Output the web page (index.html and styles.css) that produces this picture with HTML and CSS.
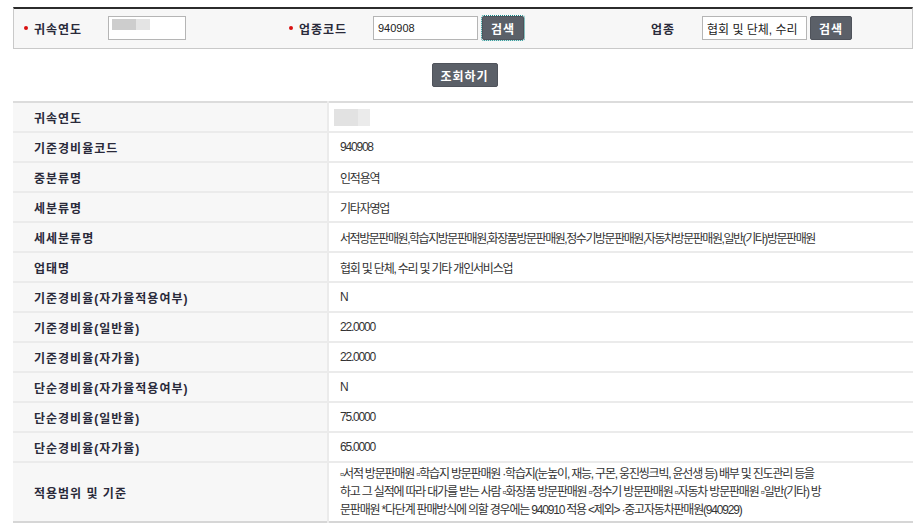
FILE: index.html
```html
<!DOCTYPE html>
<html lang="ko">
<head>
  <meta charset="UTF-8" />
  <title>기준경비율 조회</title>
  <link rel="stylesheet" href="styles.css">
</head>
<body>
  <div class="wrap">
    <div class="search-box">
      <div class="field">
        <label class="req">귀속연도</label>
        <div class="input year"><span class="blur dark"></span><span class="blur light"></span></div>
      </div>
      <div class="field">
        <label class="req">업종코드</label>
        <div class="input code">940908</div>
        <button class="btn focused">검색</button>
      </div>
      <div class="field">
        <label class="plain">업종</label>
        <div class="input name">협회 및 단체, 수리</div>
        <button class="btn">검색</button>
      </div>
    </div>

    <div class="actions">
      <button class="btn big">조회하기</button>
    </div>

    <table class="result">
      <tbody>
        <tr><th>귀속연도</th><td><span class="blur cell dark"></span><span class="blur cell light"></span></td></tr>
        <tr><th>기준경비율코드</th><td>940908</td></tr>
        <tr><th>중분류명</th><td>인적용역</td></tr>
        <tr><th>세분류명</th><td>기타자영업</td></tr>
        <tr><th>세세분류명</th><td class="tight">서적방문판매원,학습지방문판매원,화장품방문판매원,정수기방문판매원,자동차방문판매원,일반(기타)방문판매원</td></tr>
        <tr><th>업태명</th><td>협회 및 단체, 수리 및 기타 개인서비스업</td></tr>
        <tr><th>기준경비율(자가율적용여부)</th><td>N</td></tr>
        <tr><th>기준경비율(일반율)</th><td>22.0000</td></tr>
        <tr><th>기준경비율(자가율)</th><td>22.0000</td></tr>
        <tr><th>단순경비율(자가율적용여부)</th><td>N</td></tr>
        <tr><th>단순경비율(일반율)</th><td>75.0000</td></tr>
        <tr><th>단순경비율(자가율)</th><td>65.0000</td></tr>
        <tr class="long">
          <th>적용범위 및 기준</th>
          <td>▫서적 방문판매원 ▫학습지 방문판매원 ·학습지(눈높이, 재능, 구몬, 웅진씽크빅, 윤선생 등) 배부 및 진도관리 등을 하고 그 실적에 따라 대가를 받는 사람 ▫화장품 방문판매원 ▫정수기 방문판매원 ▫자동차 방문판매원 ▫일반(기타) 방문판매원 *다단계 판매방식에 의할 경우에는 940910 적용 &lt;제외&gt; ·중고자동차판매원(940929)</td>
        </tr>
      </tbody>
    </table>
  </div>
</body>
</html>
```

FILE: styles.css
```css
body {
  margin: 0;
  background: #fff;
  color: #333;
  font-family: "Liberation Sans", "Noto Sans CJK KR", sans-serif;
  font-size: 12px;
}
.wrap {
  width: 900px;
  margin: 7px 0 0 13px;
}

/* search box */
.search-box {
  display: grid;
  grid-template-columns: 265px 362px auto;
  align-items: center;
  padding: 7px 10px 8px 10px;
  background: #f7f7f7;
  border-top: 2px solid #2b2b2b;
  border-left: 1px solid #c9c9c9;
  border-right: 1px solid #c9c9c9;
  border-bottom: 1px solid #c9c9c9;
}
.field {
  display: flex;
  align-items: center;
}
.field label {
  display: flex;
  align-items: center;
  font-weight: bold;
  color: #2a2a3a;
  letter-spacing: 1px;
}
.req {
  width: 84px;
}
.req::before {
  content: "";
  width: 4px;
  height: 4px;
  border-radius: 50%;
  background: #d81010;
  margin-right: 6px;
}
.plain {
  width: 51px;
}
.input {
  box-sizing: border-box;
  height: 24px;
  padding: 0 4px;
  display: flex;
  align-items: center;
  background: #fff;
  border: 1px solid #b5b5b5;
  color: #222;
}
.year { width: 78px; padding-left: 3px; }
.code { width: 105px; font-size: 11px; }
.name { width: 105px; white-space: nowrap; }

.blur {
  display: inline-block;
  height: 11px;
}
.blur.dark { width: 24px; background: #cdcdcd; margin-top: -8px; }
.blur.light { width: 14px; background: #e4e4e4; margin-top: -8px; }
.blur.cell { height: 17px; margin-top: 0; vertical-align: middle; }
.blur.cell.dark { width: 24px; background: #e2e2e2; margin-left: -6px; }
.blur.cell.light { width: 12px; background: #ebebeb; }

.btn {
  box-sizing: border-box;
  width: 42px;
  height: 24px;
  margin-left: 4px;
  padding: 0;
  border: 1px solid #4f535b;
  border-radius: 2px;
  background: #5b6068;
  color: #fff;
  font-family: inherit;
  font-size: 12px;
  font-weight: bold;
  letter-spacing: 1px;
}
.field:last-child .btn { margin-left: 3px; }
.focused {
  outline: 1px dotted #118a8a;
  outline-offset: 0;
}
.actions {
  display: flex;
  justify-content: center;
  padding: 14px 0;
}
.btn.big {
  width: 66px;
  margin: 0 0 0 3px;
}

/* result table */
.result {
  width: 900px;
  border-collapse: collapse;
  border-top: 2px solid #dcdcdc;
  border-bottom: 2px solid #d6d6d6;
}
.result tr {
  border-top: 2px solid #ebebeb;
}
.result tr:first-child {
  border-top: none;
}
.result th {
  width: 293px;
  height: 28px;
  padding: 0 0 0 21px;
  background: #f7f7f7;
  text-align: left;
  font-weight: bold;
  color: #2a2a3a;
  letter-spacing: 1px;
}
.result td {
  padding: 0 10px 0 11px;
  border-left: 2px solid #ebebeb;
  font-size: 12px;
  letter-spacing: -1.2px;
  color: #333;
}
.result td.tight {
  letter-spacing: -1.45px;
}
.result .long td {
  padding: 2px 90px 2px 11px;
  line-height: 18px;
}
```
